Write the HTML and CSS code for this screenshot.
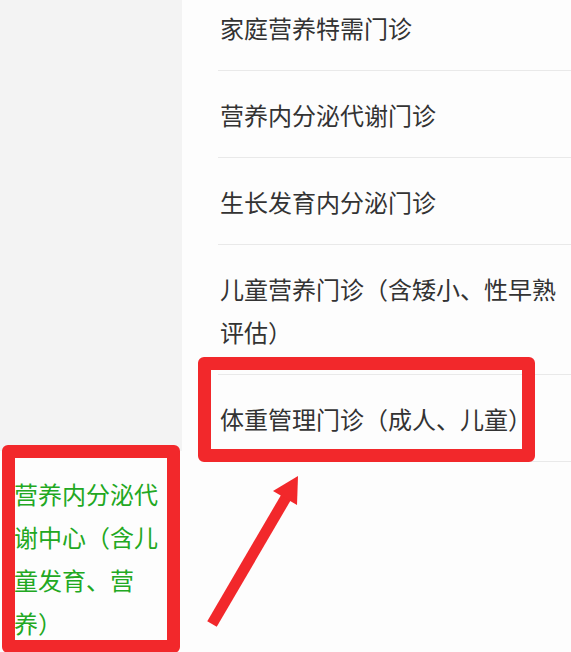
FILE: index.html
```html
<!DOCTYPE html>
<html lang="zh-CN">
<head>
  <meta charset="UTF-8">
  <title>门诊科室</title>
  <link rel="stylesheet" href="styles.css">
</head>
<body>
  <div class="page">
    <!-- Left category menu -->
    <aside class="sidebar">
      <div class="side-item active">营养内分泌代谢中心（含儿童发育、营养）</div>
    </aside>

    <!-- Clinic list -->
    <main class="content">
      <ul class="clinic-list">
        <li>家庭营养特需门诊</li>
        <li>营养内分泌代谢门诊</li>
        <li>生长发育内分泌门诊</li>
        <li>儿童营养门诊（含矮小、性早熟评估）</li>
        <li>体重管理门诊（成人、儿童）</li>
      </ul>
    </main>
  </div>

  <!-- Red annotation marks -->
  <div class="mark mark-side"></div>
  <div class="mark mark-item"></div>
  <svg class="arrow" width="571" height="652" viewBox="0 0 571 652">
    <line x1="212" y1="624" x2="288" y2="494" stroke="#f2282b" stroke-width="11"/>
    <polygon points="298,476 297,505 273,491" fill="#f2282b"/>
  </svg>
</body>
</html>
```

FILE: styles.css
```css
body {
  margin: 0;
  font-family: "Noto Sans CJK SC", "Noto Sans", sans-serif;
  background-color: #fdfdfd;
  color: #333;
}

.page {
  display: flex;
  width: 571px;
  height: 652px;
  overflow: hidden;
}

.sidebar {
  width: 182px;
  flex-shrink: 0;
  background-color: #f3f3f3;
  display: flex;
  flex-direction: column;
}

.side-item {
  margin-top: 451px;
  padding: 21px 14px 21px 14px;
  font-size: 24px;
  line-height: 43px;
  color: #22a822;
  background-color: #fdfdfd;
}

.content {
  flex: 1;
  background-color: #fdfdfd;
}

.clinic-list {
  list-style: none;
  margin: -16px 0 0 0;
  padding: 0 0 0 36px;
}

.clinic-list li {
  padding: 21.5px 10px 21.5px 2px;
  font-size: 24px;
  line-height: 43px;
  color: #333;
  border-bottom: 1px solid #e9e9e9;
}

/* annotation overlays */
.mark {
  position: absolute;
  border: 13px solid #f2282b;
  border-radius: 6px;
  box-sizing: border-box;
}

.mark-side {
  left: 2px;
  top: 445px;
  width: 178px;
  height: 208px;
}

.mark-item {
  left: 198px;
  top: 357px;
  width: 337px;
  height: 105px;
}

.arrow {
  position: absolute;
  left: 0;
  top: 0;
}
```
